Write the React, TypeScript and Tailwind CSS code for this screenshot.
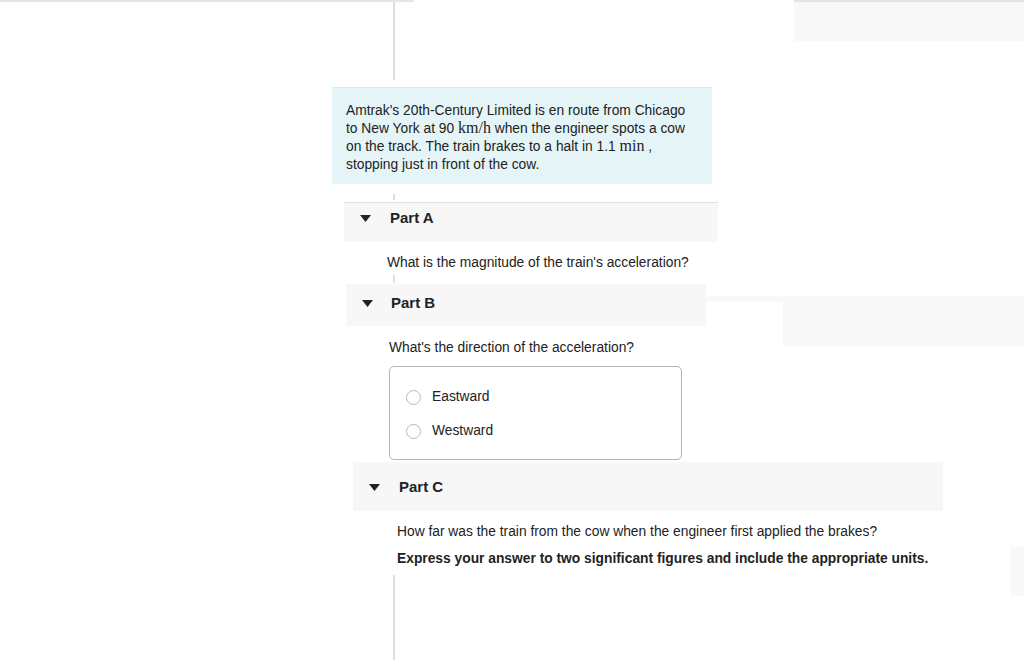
import React from "react";

const Caret: React.FC = () => (
  <svg width="11" height="7" viewBox="0 0 11 7" className="shrink-0">
    <path d="M0 0 H11 L5.5 7 Z" fill="#222" />
  </svg>
);

const Radio: React.FC<{ label: string }> = ({ label }) => (
  <label className="flex items-center h-[18px]">
    <span className="w-[15px] h-[15px] rounded-full border border-[#b9b9b9] bg-white shrink-0" />
    <span className="ml-[11px] text-[13.8px] text-[#222]">{label}</span>
  </label>
);

const Tick: React.FC<{ h: string }> = ({ h }) => (
  <div className={`ml-[393px] w-[2px] bg-[#d6e0ea] ${h}`} />
);

const serif = { fontFamily: '"Liberation Serif", serif' };

export default function App() {
  return (
    <div
      className="w-[1024px] h-[660px] overflow-hidden bg-white text-[#222]"
      style={{ fontFamily: '"Liberation Sans", Arial, sans-serif' }}
    >
      {/* top strip */}
      <div className="flex items-start">
        <div className="w-[794px] flex flex-col">
          <div className="w-[414px] h-[2px] bg-[#e6e6e6]" />
          <Tick h="h-[78px]" />
        </div>
        <div className="flex-1 h-[41px] bg-[#f8f8f8] border-t-2 border-[#e4e4e4]" />
      </div>

      {/* problem statement */}
      <div className="mt-[7px] ml-[332px] w-[380px] h-[97px] bg-[#e5f5f7] border-t border-[#dfe7e9] pl-[14px] pt-[14px] text-[13.8px] leading-[17.9px]">
        Amtrak's 20th-Century Limited is en route from Chicago
        <br />
        to New York at 90{" "}
        <span className="text-[16px] leading-none" style={serif}>
          km/h
        </span>{" "}
        when the engineer spots a cow
        <br />
        on the track. The train brakes to a halt in 1.1{" "}
        <span className="text-[16px] leading-none" style={serif}>
          min
        </span>{" "}
        ,
        <br />
        stopping just in front of the cow.
      </div>

      <div className="mt-[10px]">
        <Tick h="h-[6px]" />
      </div>

      {/* Part A */}
      <div className="mt-[2px] ml-[344px] w-[374px] h-[40px] bg-[#f7f7f7] border-t border-[#e3e3e3] flex items-center pl-[16px] pb-[8px]">
        <Caret />
        <span className="ml-[19px] text-[15px] font-bold">Part A</span>
      </div>
      <div className="mt-[12px] ml-[387px] text-[13.8px] leading-[18px]">
        What is the magnitude of the train's acceleration?
      </div>
      <div className="mt-[3px]">
        <Tick h="h-[8px]" />
      </div>

      {/* Part B */}
      <div className="mt-[1px] flex items-start">
        <div className="w-[706px] flex flex-col">
          <div className="ml-[346px] w-[360px] h-[42px] bg-[#f7f7f7] flex items-center pl-[16px] pb-[4px]">
            <Caret />
            <span className="ml-[18px] text-[15px] font-bold">Part B</span>
          </div>
          <div className="mt-[13px] ml-[389px] text-[13.8px] leading-[18px]">
            What's the direction of the acceleration?
          </div>
          <div className="mt-[9px] ml-[389px] w-[293px] h-[94px] border border-[#b3b3b3] rounded-[5px] pl-[16px] pt-[21px] flex flex-col gap-[16px]">
            <Radio label="Eastward" />
            <Radio label="Westward" />
          </div>
        </div>
        <div className="flex-1 flex flex-col mt-[12px]">
          <div className="h-[6px] bg-[#f8f8f8]" />
          <div className="ml-[77px] h-[44px] bg-[#f8f8f8]" />
        </div>
      </div>

      {/* Part C */}
      <div className="mt-[2px] ml-[353px] w-[590px] h-[49px] bg-[#f7f7f7] flex items-center pl-[16px] pt-[1px]">
        <Caret />
        <span className="ml-[19px] text-[15px] font-bold">Part C</span>
      </div>
      <div className="flex items-start">
        <div className="w-[1011px] flex flex-col">
          <div className="mt-[12px] ml-[397px] text-[13.8px] leading-[18px]">
            How far was the train from the cow when the engineer first applied the brakes?
          </div>
          <div className="mt-[9px] ml-[397px] text-[13.8px] leading-[18px] font-bold">
            Express your answer to two significant figures and include the appropriate units.
          </div>
          <div className="mt-[7px]">
            <Tick h="h-[90px]" />
          </div>
        </div>
        <div className="flex-1 mt-[36px] h-[49px] bg-[#f8f8f8]" />
      </div>
    </div>
  );
}
